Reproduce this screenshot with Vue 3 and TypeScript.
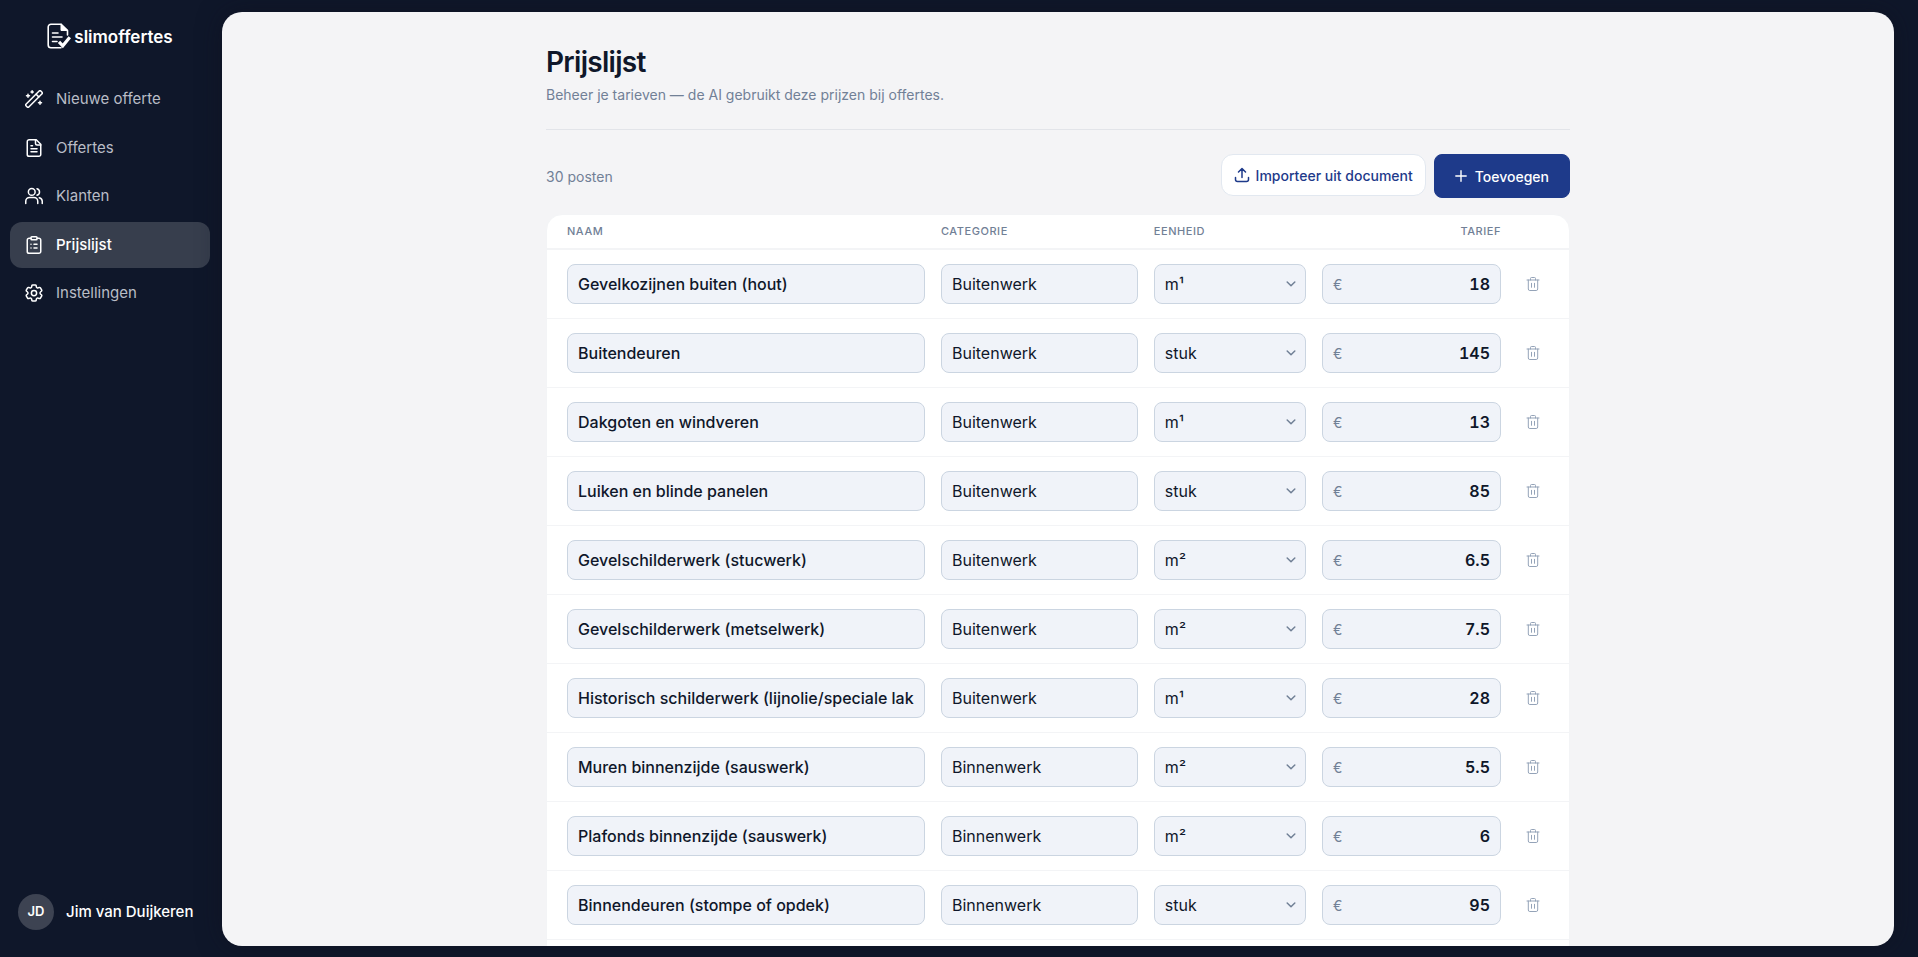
<script setup lang="ts">
import { ref } from 'vue'

type IconName = 'wand' | 'file' | 'users' | 'clipboard' | 'gear'

interface NavItem {
  label: string
  icon: IconName
  active?: boolean
}

interface PriceItem {
  name: string
  category: string
  unit: string
  rate: string
}

const navItems: NavItem[] = [
  { label: 'Nieuwe offerte', icon: 'wand' },
  { label: 'Offertes', icon: 'file' },
  { label: 'Klanten', icon: 'users' },
  { label: 'Prijslijst', icon: 'clipboard', active: true },
  { label: 'Instellingen', icon: 'gear' },
]

const units = ['m¹', 'm²', 'stuk']
const total = 30

const items = ref<PriceItem[]>([
  { name: 'Gevelkozijnen buiten (hout)', category: 'Buitenwerk', unit: 'm¹', rate: '18' },
  { name: 'Buitendeuren', category: 'Buitenwerk', unit: 'stuk', rate: '145' },
  { name: 'Dakgoten en windveren', category: 'Buitenwerk', unit: 'm¹', rate: '13' },
  { name: 'Luiken en blinde panelen', category: 'Buitenwerk', unit: 'stuk', rate: '85' },
  { name: 'Gevelschilderwerk (stucwerk)', category: 'Buitenwerk', unit: 'm²', rate: '6.5' },
  { name: 'Gevelschilderwerk (metselwerk)', category: 'Buitenwerk', unit: 'm²', rate: '7.5' },
  { name: 'Historisch schilderwerk (lijnolie/speciale lak)', category: 'Buitenwerk', unit: 'm¹', rate: '28' },
  { name: 'Muren binnenzijde (sauswerk)', category: 'Binnenwerk', unit: 'm²', rate: '5.5' },
  { name: 'Plafonds binnenzijde (sauswerk)', category: 'Binnenwerk', unit: 'm²', rate: '6' },
  { name: 'Binnendeuren (stompe of opdek)', category: 'Binnenwerk', unit: 'stuk', rate: '95' },
])

function removeItem(index: number) {
  items.value.splice(index, 1)
}
</script>

<template>
  <div class="app">
    <aside class="sidebar">
      <a class="logo" href="#">
        <svg class="logo-mark" viewBox="0 0 24 26" fill="none" stroke="currentColor" stroke-width="1.6" stroke-linecap="round" stroke-linejoin="round" aria-hidden="true">
          <path d="M20.5 12V7.5L14 1.2H4A2.8 2.8 0 0 0 1.2 4v18A2.8 2.8 0 0 0 4 24.8h10" />
          <path d="M14 1.2v6.3h6.5Z" fill="currentColor" stroke-width="1" />
          <path d="M5.5 10H11M5.5 14H15M5.5 18.5H10" />
          <path d="m12 18.800 3.800 4 7-8.600" stroke-width="3.200" stroke-linecap="butt" stroke-linejoin="miter" />
        </svg>
        <span>slimoffertes</span>
      </a>

      <nav class="nav">
        <a v-for="item in navItems" :key="item.label" href="#" class="nav-item" :class="{ active: item.active }">
          <svg class="nav-icon" viewBox="0 0 24 24" fill="none" stroke="currentColor" stroke-width="2" stroke-linecap="round" stroke-linejoin="round" aria-hidden="true">
            <template v-if="item.icon === 'wand'">
              <g transform="translate(12 12) rotate(-45)">
                <rect x="-14" y="-2.700" width="28" height="5.400" rx="2" />
                <path d="M6.500-2.500v5" />
              </g>
              <path d="M4 5.500v4M2 7.500h4M20 15v4M18 17h4M9.500 1v3M8 2.500h3" />
            </template>
            <template v-else-if="item.icon === 'file'">
              <path d="M15 1H5.500a2.500 2.500 0 0 0-2.500 2.500v17A2.500 2.500 0 0 0 5.500 23h13a2.500 2.500 0 0 0 2.500-2.500V7Z" />
              <path d="M14 1v5a2 2 0 0 0 2 2h5M10 9H8M16 13H8M16 17H8" />
            </template>
            <template v-else-if="item.icon === 'users'">
              <path d="M17 22v-3a5 5 0 0 0-5-5H6a5 5 0 0 0-5 5v3M23 22v-3a5 5 0 0 0-4-4.800M16 2.200a4.500 4.500 0 0 1 0 8.700" />
              <circle cx="9" cy="6.500" r="4.500" />
            </template>
            <template v-else-if="item.icon === 'clipboard'">
              <rect x="8" y="1" width="8" height="4" rx="1" />
              <path d="M16 3h2.500A2.500 2.500 0 0 1 21 5.500v15a2.500 2.500 0 0 1-2.500 2.500h-13A2.500 2.500 0 0 1 3 20.500v-15A2.500 2.500 0 0 1 5.500 3H8M12 11h4M12 16h4M8 11h.01M8 16h.01" />
            </template>
            <template v-else>
              <path d="M9.594 3.940c.09-.542.560-.940 1.110-.940h2.593c.550 0 1.020.398 1.110.940l.213 1.281c.063.374.313.686.645.870.074.040.147.083.220.127.325.196.720.257 1.075.124l1.217-.456a1.125 1.125 0 0 1 1.370.490l1.296 2.247a1.125 1.125 0 0 1-.260 1.431l-1.003.827c-.293.241-.438.613-.430.992a7.723 7.723 0 0 1 0 .255c-.008.378.137.750.430.991l1.004.827c.424.350.534.955.260 1.430l-1.298 2.247a1.125 1.125 0 0 1-1.369.491l-1.217-.456c-.355-.133-.750-.072-1.076.124a6.470 6.470 0 0 1-.220.128c-.331.183-.581.495-.644.869l-.213 1.281c-.090.543-.560.940-1.110.940h-2.594c-.550 0-1.019-.398-1.110-.940l-.213-1.281c-.062-.374-.312-.686-.644-.870a6.520 6.520 0 0 1-.220-.127c-.325-.196-.720-.257-1.076-.124l-1.217.456a1.125 1.125 0 0 1-1.369-.490l-1.297-2.247a1.125 1.125 0 0 1 .260-1.431l1.004-.827c.292-.240.437-.613.430-.991a6.932 6.932 0 0 1 0-.255c.007-.380-.138-.751-.430-.992l-1.004-.827a1.125 1.125 0 0 1-.260-1.430l1.297-2.247a1.125 1.125 0 0 1 1.370-.491l1.216.456c.356.133.751.072 1.076-.124.072-.044.146-.086.220-.128.332-.183.582-.495.644-.869l.214-1.280Z" transform="translate(-2.400 -2.400) scale(1.200)" stroke-width="1.700" />
              <circle cx="12" cy="12" r="3.500" />
            </template>
          </svg>
          <span>{{ item.label }}</span>
        </a>
      </nav>

      <button type="button" class="account">
        <span class="avatar">JD</span>
        <span>Jim van Duijkeren</span>
      </button>
    </aside>

    <main class="panel">
      <div class="content">
        <header class="page-header">
          <h1>Prijslijst</h1>
          <p>Beheer je tarieven — de AI gebruikt deze prijzen bij offertes.</p>
        </header>

        <div class="toolbar">
          <span class="count">{{ total }} posten</span>
          <div class="actions">
            <button type="button" class="btn btn-light">
              <svg class="upload-icon" viewBox="0 0 16 16" fill="none" stroke="currentColor" stroke-width="1.500" stroke-linecap="round" stroke-linejoin="round" aria-hidden="true">
                <path d="M1.500 10.500v2a2 2 0 0 0 2 2h9a2 2 0 0 0 2-2v-2M8 10.500v-9M4.500 5 8 1.500 11.500 5" />
              </svg>
              Importeer uit document
            </button>
            <button type="button" class="btn btn-primary">
              <svg class="plus-icon" viewBox="0 0 12 12" fill="none" stroke="currentColor" stroke-width="1.400" stroke-linecap="round" aria-hidden="true">
                <path d="M6 .8v10.400M.8 6h10.400" />
              </svg>
              Toevoegen
            </button>
          </div>
        </div>

        <div class="card">
          <table class="prices">
            <thead>
              <tr>
                <th scope="col">Naam</th>
                <th scope="col">Categorie</th>
                <th scope="col">Eenheid</th>
                <th scope="col" class="right">Tarief</th>
                <td></td>
              </tr>
            </thead>
            <tbody>
              <tr v-for="(item, i) in items" :key="i">
                <td><input v-model="item.name" class="field name" type="text" aria-label="Naam" /></td>
                <td><input v-model="item.category" class="field" type="text" aria-label="Categorie" /></td>
                <td class="unit">
                  <select v-model="item.unit" class="field" aria-label="Eenheid">
                    <option v-for="u in units" :key="u" :value="u">{{ u }}</option>
                  </select>
                  <svg class="chevron" viewBox="0 0 10 6" fill="none" stroke="currentColor" stroke-width="1.500" stroke-linecap="round" stroke-linejoin="round" aria-hidden="true">
                    <path d="m1.200 1 3.800 3.800L8.800 1" />
                  </svg>
                </td>
                <td>
                  <label class="field rate">
                    <span>€</span>
                    <input v-model="item.rate" type="text" inputmode="decimal" aria-label="Tarief" />
                  </label>
                </td>
                <td class="remove">
                  <button type="button" aria-label="Verwijderen" @click="removeItem(i)">
                    <svg viewBox="0 0 14 16" fill="none" stroke="currentColor" stroke-linecap="round" stroke-linejoin="round" aria-hidden="true">
                      <path d="M1 4h12M4.500 4V2.500a1 1 0 0 1 1-1h3a1 1 0 0 1 1 1V4M2.300 4v9a1.500 1.500 0 0 0 1.500 1.500h6.400a1.500 1.500 0 0 0 1.500-1.500V4M5.500 7.300v4M8.500 7.300v4" />
                    </svg>
                  </button>
                </td>
              </tr>
            </tbody>
          </table>
        </div>
      </div>
    </main>
  </div>
</template>

<style>
body {
  margin: 0;
  background: #0f172a;
}
</style>

<style scoped>
.app,
.app * {
  box-sizing: border-box;
}

.app {
  display: flex;
  height: 100vh;
  padding: 12px 24px 11px 0;
  background: #0f172a;
  color: #0f172a;
  font-family: Inter, "Liberation Sans", sans-serif;
  font-size: 14px;
  line-height: 1.5;
}

button,
input,
select {
  font: inherit;
  color: inherit;
}

button {
  cursor: pointer;
}

.sidebar {
  display: flex;
  flex-direction: column;
  flex: 0 0 222px;
  padding: 10px 12px 0 10px;
  color: #fff;
}

.logo {
  display: flex;
  align-items: flex-end;
  justify-content: center;
  gap: 3px;
  height: 27px;
  color: #fff;
  font-size: 17px;
  font-weight: 600;
  line-height: 24px;
  text-decoration: none;
}

.logo-mark {
  width: 24px;
  height: 26px;
}

.nav {
  display: flex;
  flex-direction: column;
  gap: 2px;
  margin-top: 27px;
}

.nav-item {
  display: flex;
  align-items: center;
  gap: 13px;
  padding: 12px 15px;
  border-radius: 12px;
  color: #fff;
  font-size: 15px;
  text-decoration: none;
}

.nav-item span {
  color: #b9bdc6;
}

.nav-item.active {
  background: #373e4d;
}

.nav-item.active span {
  color: #fff;
  font-weight: 500;
}

.nav-icon {
  flex: none;
  width: 18px;
  height: 18px;
}

.account {
  display: flex;
  align-items: center;
  gap: 12px;
  margin: auto 0 16px;
  padding: 0 8px;
  border: 0;
  background: none;
  color: #fff;
  font-size: 15px;
  font-weight: 500;
}

.avatar {
  display: grid;
  place-items: center;
  width: 36px;
  height: 36px;
  border-radius: 50%;
  background: #3d4352;
  font-size: 13px;
  font-weight: 600;
}

.panel {
  flex: 1;
  min-width: 0;
  overflow-y: auto;
  scrollbar-width: none;
  padding: 32px 24px 0;
  border-radius: 20px;
  background: #f4f4f6;
  box-shadow: 0 0 24px rgb(15 15 30 / 50%);
}

.content {
  max-width: 1024px;
  margin: 0 auto;
}

.page-header {
  padding-bottom: 24px;
  border-bottom: 1px solid #e2e4e9;
}

h1 {
  margin: 0;
  font-size: 28px;
  font-weight: 600;
  line-height: 36px;
  letter-spacing: -0.025em;
}

.page-header p {
  margin: 4px 0 0;
  color: #718096;
  line-height: 21px;
}

.toolbar {
  display: flex;
  align-items: center;
  justify-content: space-between;
  margin: 24px 0 16px;
}

.count {
  color: #718096;
}

.actions {
  display: flex;
  align-items: flex-start;
  gap: 8px;
}

.btn {
  display: flex;
  align-items: center;
  font-weight: 500;
}

.btn-light {
  gap: 6px;
  height: 42px;
  padding: 0 12px;
  border: 1px solid #e2e8f0;
  border-radius: 12px;
  background: #fff;
  color: #1e3a8a;
}

.btn-primary {
  gap: 8px;
  height: 44px;
  padding: 0 20px;
  border: 1px solid #1e3a8a;
  border-radius: 8px;
  background: #1e3a8a;
  color: #fff;
}

.upload-icon {
  width: 16px;
  height: 16px;
}

.plus-icon {
  width: 12px;
  height: 12px;
}

.card {
  padding-bottom: 20px;
  border: 1px solid #f3f4f6;
  border-radius: 16px;
  background: #fff;
}

.prices,
.prices thead,
.prices tbody {
  display: block;
}

.prices tr {
  display: grid;
  grid-template-columns: 2fr 1.1fr 0.85fr 1fr 32px;
  gap: 16px;
  align-items: center;
  padding: 14px 20px;
  border-bottom: 1px solid #f3f4f6;
}

.prices thead tr {
  padding: 8px 20px 9px;
  border-bottom-width: 2px;
}

.prices th,
.prices td {
  display: block;
  min-width: 0;
  padding: 0;
}

.prices th {
  color: #718096;
  font-size: 11px;
  font-weight: 500;
  line-height: 16px;
  letter-spacing: 0.05em;
  text-align: left;
  text-transform: uppercase;
}

.prices th.right {
  text-align: right;
}

.field {
  display: block;
  width: 100%;
  height: 40px;
  padding: 0 10px;
  border: 1px solid #cbd5e1;
  border-radius: 8px;
  outline: 0;
  background: #f0f3f9;
  font-size: 16px;
}

.field.name {
  font-weight: 500;
}

.unit {
  position: relative;
}

.unit select {
  appearance: none;
}

.chevron {
  position: absolute;
  top: 17px;
  right: 10px;
  width: 10px;
  height: 6px;
  color: #718096;
  pointer-events: none;
}

.rate {
  display: flex;
  align-items: center;
}

.rate span {
  color: #718096;
  font-size: 14px;
}

.rate input {
  flex: 1;
  min-width: 0;
  padding: 0;
  border: 0;
  outline: 0;
  background: none;
  font-weight: 600;
  font-variant-numeric: tabular-nums;
  text-align: right;
}

.remove button {
  display: grid;
  place-items: center;
  width: 32px;
  height: 32px;
  padding: 0;
  border: 0;
  background: none;
  color: #94a3b8;
}

.remove svg {
  width: 14px;
  height: 16px;
}
</style>
